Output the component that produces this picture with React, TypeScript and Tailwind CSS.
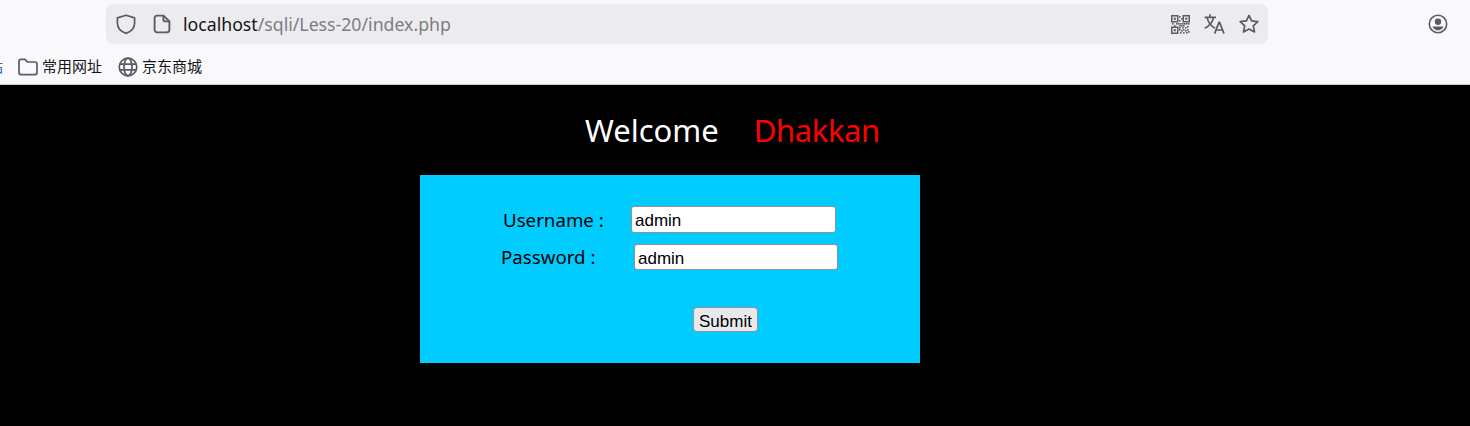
import React from "react";

const stroke = "#5b5b66";

function Shield() {
  return (
    <svg width="22" height="22" viewBox="0 0 22 22" fill="none" stroke={stroke} strokeWidth="1.7">
      <path d="M11 2.2 L19.6 4.9 V10 C19.6 15 16 18.6 11 20.4 C6 18.6 2.4 15 2.4 10 V4.9 Z" strokeLinejoin="round" />
    </svg>
  );
}
function PageIcon() {
  return (
    <svg width="18" height="20" viewBox="0 0 18 20" fill="none" stroke={stroke} strokeWidth="1.9" strokeLinejoin="round">
      <path d="M4 1.6 H10.5 L16.4 7.4 V15.8 A2.6 2.6 0 0 1 13.8 18.4 H4.2 A2.6 2.6 0 0 1 1.6 15.8 V4 A2.4 2.4 0 0 1 4 1.6 Z" />
      <path d="M10.4 1.8 V5.4 A2 2 0 0 0 12.4 7.4 H16.2" />
    </svg>
  );
}
function Qr() {
  const cells = [[8,1],[10,3],[8,5],[1,8],[3,10],[5,8],[7,8],[9,8],[11,8],[13,8],[15,8],[17,8],[8,10],[10,10],[12,10],[8,12],[11,12],[14,12],[16,11],[8,14],[10,15],[12,14],[14,15],[16,14],[9,17],[12,17],[15,17],[17,16]];
  return (
    <svg width="19" height="19" viewBox="0 0 19 19" fill={stroke}>
      <path fillRule="evenodd" d="M0 0h7.5v7.5H0z M1.5 1.5v4.5h4.5v-4.5z M11.5 0H19v7.5h-7.5z M13 1.5v4.5h4.5v-4.5z M0 11.5h7.5V19H0z M1.5 13v4.5h4.5V13z" />
      <rect x="2.7" y="2.7" width="2.1" height="2.1" />
      <rect x="14.2" y="2.7" width="2.1" height="2.1" />
      <rect x="2.7" y="14.2" width="2.1" height="2.1" />
      {cells.map(([x, y], i) => (
        <rect key={i} x={x} y={y} width="1.6" height="1.6" />
      ))}
    </svg>
  );
}
function Translate() {
  return (
    <svg width="21" height="20" viewBox="0 0 21 20" fill="none" stroke={stroke} strokeWidth="1.7" strokeLinejoin="round">
      <path d="M0.6 3.4 H12 M6 0.2 V3.4 M3 3.4 C4.2 8.4 7 12.2 11 14.2 M9.6 3.4 C8.6 8.2 5.6 11.8 0.8 14.2" />
      <path d="M10.6 19.6 L15 8.4 H15.6 L20 19.6 M12.2 16 H18.4" />
    </svg>
  );
}
function Star() {
  return (
    <svg width="20" height="20" viewBox="0 0 20 20" fill="none" stroke={stroke} strokeWidth="1.7" strokeLinejoin="round">
      <path d="M10 1.4 L12.6 6.9 L18.8 7.7 L14.3 11.9 L15.5 18 L10 15 L4.5 18 L5.7 11.9 L1.2 7.7 L7.4 6.9 Z" />
    </svg>
  );
}
function Account() {
  return (
    <svg width="20" height="20" viewBox="0 0 20 20" fill="none">
      <circle cx="10" cy="10" r="8.7" stroke={stroke} strokeWidth="1.6" />
      <circle cx="10" cy="7.8" r="3.2" fill={stroke} />
      <path d="M4.4 12.6 H15.6 C14.6 15 12.6 16.4 10 16.4 C7.4 16.4 5.4 15 4.4 12.6 Z" fill={stroke} />
    </svg>
  );
}
function Folder() {
  return (
    <svg width="20" height="18" viewBox="0 0 20 18" fill="none" stroke={stroke} strokeWidth="1.7" strokeLinejoin="round">
      <path d="M1 3.4 A2 2 0 0 1 3 1.4 H7 L9.4 4 H17 A2 2 0 0 1 19 6 V14.6 A2 2 0 0 1 17 16.6 H3 A2 2 0 0 1 1 14.6 Z" />
    </svg>
  );
}
function Globe() {
  return (
    <svg width="20" height="20" viewBox="0 0 20 20" fill="none" stroke={stroke} strokeWidth="1.7">
      <circle cx="10" cy="10" r="8.8" />
      <ellipse cx="10" cy="10" rx="4" ry="8.8" />
      <path d="M1.4 7.2 H18.6 M1.4 12.8 H18.6" />
    </svg>
  );
}

const uiFont = "font-['Noto_Sans','Noto_Sans_CJK_SC',sans-serif]";
const fieldFont = "font-['Liberation_Sans',sans-serif]";

export default function App() {
  return (
    <div className={`h-[426px] w-[1470px] overflow-hidden bg-black ${uiFont}`}>
      <header className="h-[85px] border-b border-[#cfcfd3] bg-[#f9f9fb]">
        <div className="flex h-[50px] items-start pl-[106px] pr-[22px] pt-[4px]">
          <div className="flex h-10 w-[1162px] items-center rounded-lg bg-[#ececee] pl-[9px] pr-[9px]">
            <Shield />
            <span className="ml-[16px]"><PageIcon /></span>
            <span className="ml-[12px] pt-[2px] text-[17.7px] leading-none text-[#15141a]">
              localhost<span className="text-[#7c7c84]">/sqli/Less-20/index.php</span>
            </span>
            <div className="ml-auto flex items-center gap-[14px]">
              <Qr />
              <Translate />
              <Star />
            </div>
          </div>
          <div className="ml-auto mt-[10px]">
            <Account />
          </div>
        </div>
        <div className="flex h-[34px] items-center text-[15px] leading-none text-[#15141a]">
          <span className="flex w-[3px] justify-end overflow-hidden pb-[2px] text-[#1a6fc0]">
            <span className="shrink-0">站</span>
          </span>
          <span className="ml-[15px]"><Folder /></span>
          <span className="ml-[4px] pb-[2px]">常用网址</span>
          <span className="ml-[16px]"><Globe /></span>
          <span className="ml-[4px] pb-[2px]">京东商城</span>
        </div>
      </header>

      <main>
        <div className="flex h-[90px] items-start pl-[585px] pt-[24px] text-[31px] leading-[42px]">
          <span className="text-white">Welcome</span>
          <span className="ml-[35px] tracking-[-0.4px] text-[#ff0000]">Dhakkan</span>
        </div>
        <form className="ml-[420px] h-[188px] w-[500px] bg-[#00ccff] pt-[31px] text-[18.7px] text-black">
          <div className="flex h-[26px] items-center pl-[83px]">
            <label className="w-[128px] pt-[2px] leading-none">Username :</label>
            <input
              readOnly
              value="admin"
              className={`h-[27px] w-[205px] rounded-[3px] border border-[#8f8f9d] bg-white px-[3px] pt-[4px] text-[17px] leading-none text-black outline-none ${fieldFont}`}
            />
          </div>
          <div className="mt-[12px] flex h-[26px] items-center pl-[81px]">
            <label className="w-[133px] leading-none">Password :</label>
            <input
              readOnly
              value="admin"
              className={`h-[26px] w-[204px] rounded-[3px] border border-[#8f8f9d] bg-white px-[3px] pt-[3px] text-[17px] leading-none text-black outline-none ${fieldFont}`}
            />
          </div>
          <div className="mt-[37px] flex pl-[273px]">
            <button
              type="button"
              className={`h-[25px] w-[65px] rounded-[4px] border border-[#8f8f9d] bg-[#e9e9ed] pt-[3px] text-[17px] leading-none text-black ${fieldFont}`}
            >
              Submit
            </button>
          </div>
        </form>
      </main>
    </div>
  );
}
